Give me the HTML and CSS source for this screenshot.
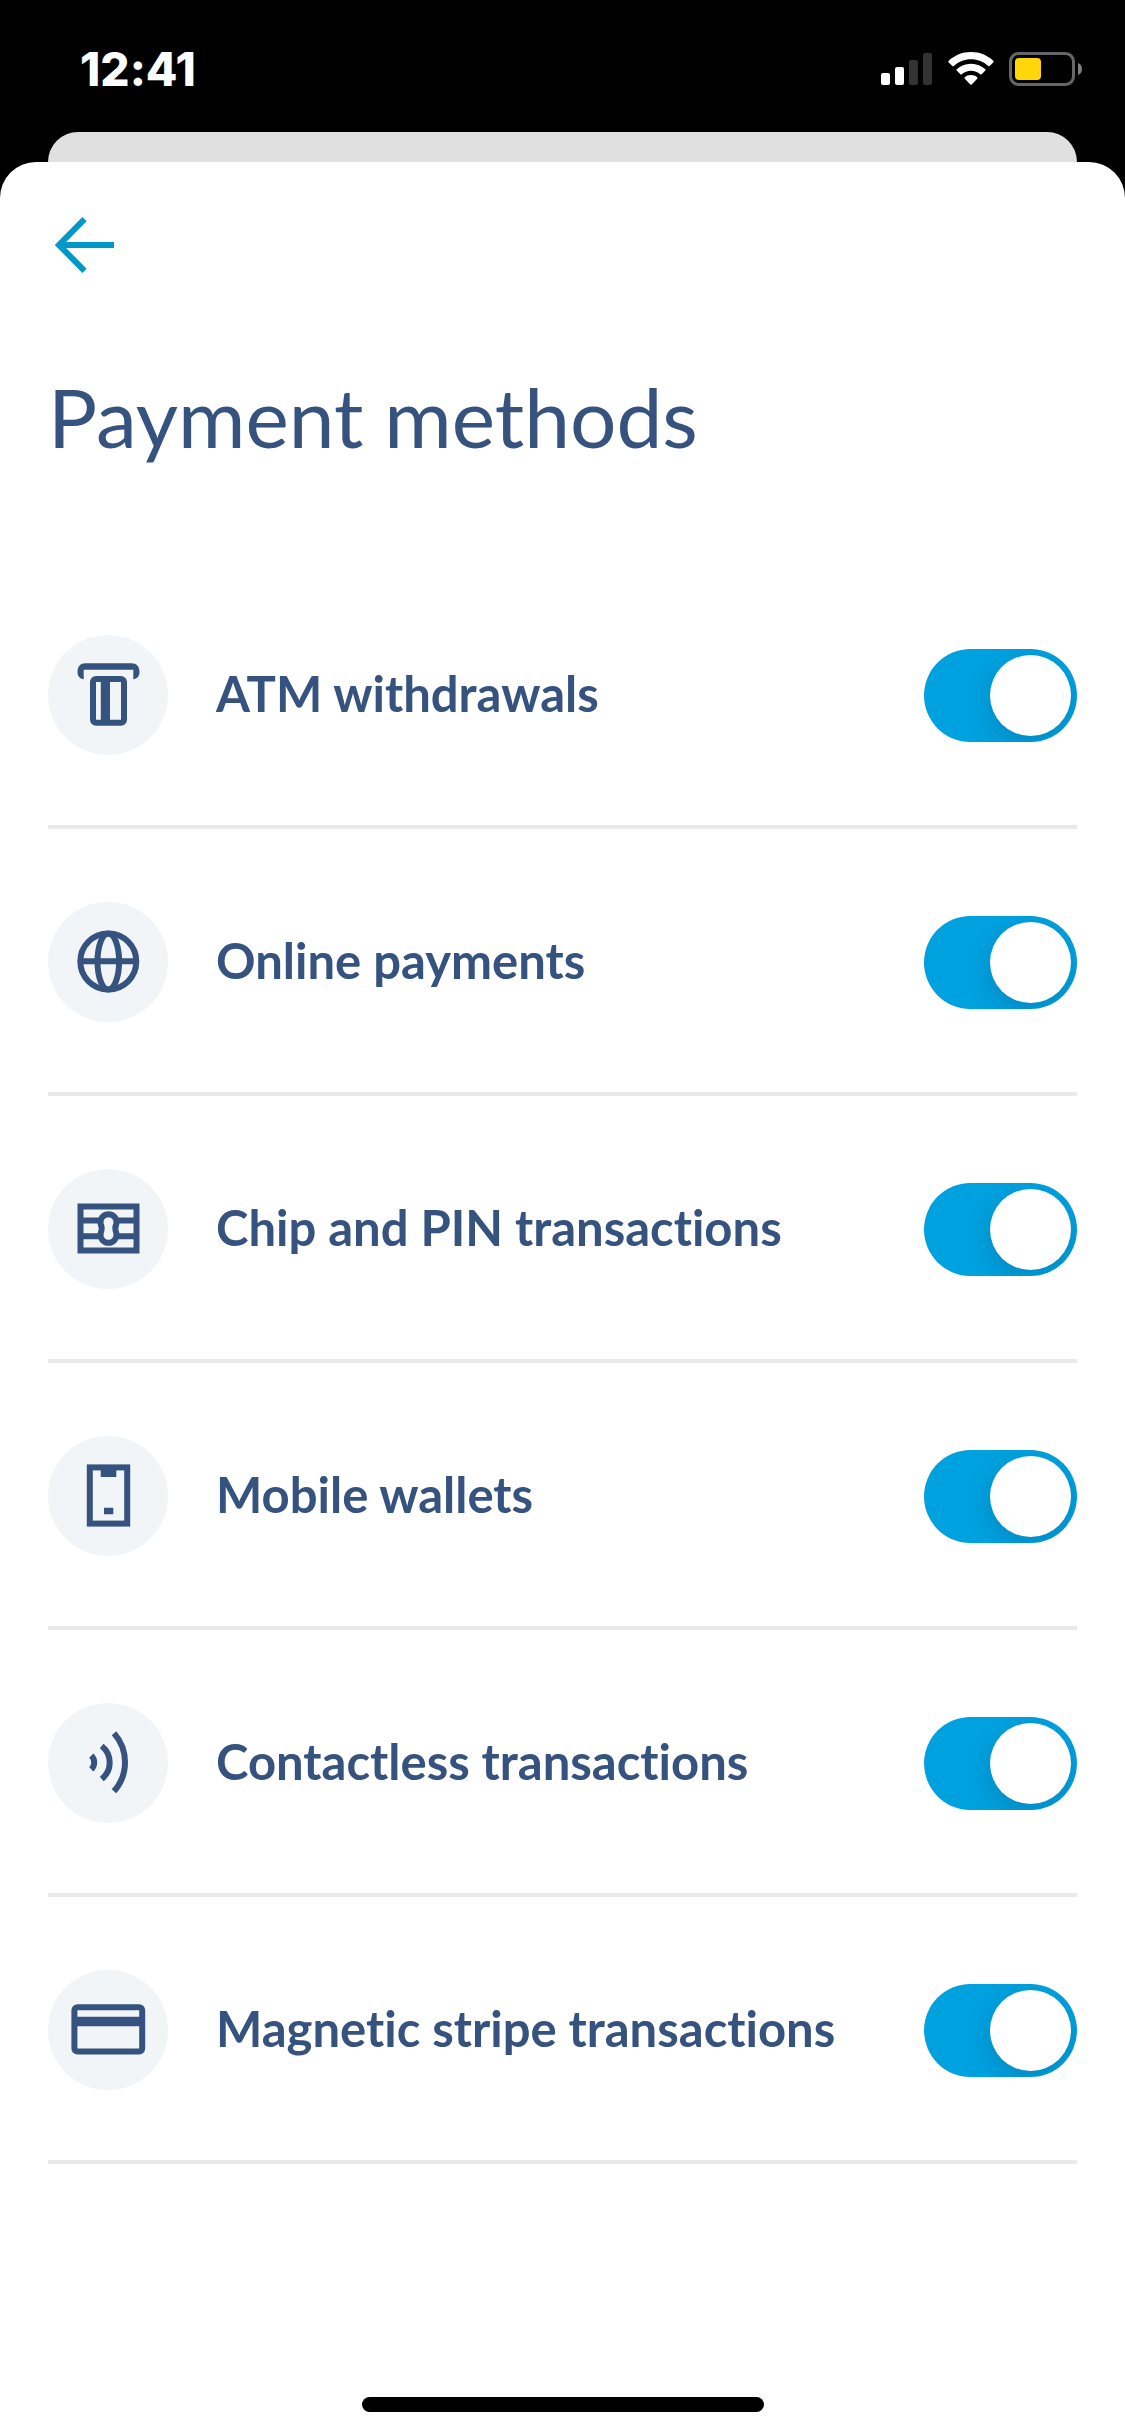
FILE: index.html
```html
<!DOCTYPE html>
<html lang="en">
<head>
    <meta charset="UTF-8">
    <meta name="viewport" content="width=device-width, initial-scale=1.0">
    <title>Payment methods</title>
    <link rel="stylesheet" href="styles.css">
</head>
<body>
    <div class="status-bar">
        <span class="time">12:41</span>
        <div class="status-icons">
            <svg width="52" height="34" viewBox="0 0 52 34">
                <rect x="0" y="21" width="9" height="12" rx="2" fill="#fff"/>
                <rect x="14" y="15" width="9" height="18" rx="2" fill="#fff"/>
                <rect x="28" y="8" width="9" height="25" rx="2" fill="#333"/>
                <rect x="42" y="1" width="9" height="32" rx="2" fill="#333"/>
            </svg>
            <svg width="46" height="34" viewBox="0 0 46 34">
                <g fill="#fff">
                    <path d="M23 0C32 0 39.600 3.400 45.300 8.800Q46 9.600 45.300 10.400L41.600 14Q40.900 14.600 40.200 14C35.500 9.700 29.600 7.300 23 7.300S10.500 9.700 5.800 14Q5.100 14.600 4.400 14L.7 10.400Q0 9.600 .7 8.800C6.400 3.400 14 0 23 0z"/>
                    <path d="M23 11.800C28.700 11.800 33.600 13.900 37.300 17.200Q38 17.900 37.300 18.600L33.600 22.200Q32.900 22.800 32.200 22.200C29.600 20 26.500 18.800 23 18.800S16.400 20 13.800 22.200Q13.100 22.800 12.400 22.200L8.700 18.600Q8 17.900 8.700 17.200C12.400 13.900 17.300 11.800 23 11.800z"/>
                    <path d="M23 23C25.600 23 27.600 23.900 29.200 25.300Q29.900 26 29.200 26.700L23.700 32.400Q23 33.200 22.300 32.400L16.800 26.700Q16.100 26 16.800 25.300C18.400 23.900 20.400 23 23 23z"/>
                </g>
            </svg>
            <svg width="74" height="34" viewBox="0 0 74 34">
                <rect x="1.500" y="1.500" width="63" height="31" rx="8" fill="none" stroke="#666" stroke-width="3"/>
                <rect x="6" y="6" width="26" height="22" rx="4" fill="#ffd60a"/>
                <path d="M69 11q4 1.500 4 6t-4 6z" fill="#808080"/>
            </svg>
        </div>
    </div>

    <div class="back-card"></div>

    <main class="sheet">
        <button class="back-btn" type="button" aria-label="Back">
            <svg width="60" height="56" viewBox="0 0 60 56">
                <path d="M29.500 2.200L4 28l25.500 25.800M5 28h54" fill="none" stroke="#0098c9" stroke-width="6"/>
            </svg>
        </button>
        <h1>Payment methods</h1>

        <ul class="methods">
            <li>
                <svg class="icon" viewBox="0 0 120 120">
                    <path d="M35.700 44.300c-4-.5-6.200-3.300-6.200-7.300 0-5.500 3-8.700 7.800-8.700h46.400c4.800 0 7.800 3.200 7.800 8.700 0 4-2.200 6.800-6.200 7.300v-9.600H35.700z" class="solid"/>
                    <rect x="45" y="44" width="31" height="43.700" rx="3"/>
                    <path d="M52.800 44H62v43H52.800z" class="solid"/>
                </svg>
                <label for="atm">ATM withdrawals</label>
                <input class="switch" type="checkbox" role="switch" id="atm" checked>
            </li>
            <li>
                <svg class="icon" viewBox="0 0 120 120">
                    <circle cx="60.300" cy="59.500" r="28"/>
                    <ellipse cx="60.300" cy="59.500" rx="10.800" ry="28"/>
                    <path d="M32 59.300h56"/>
                </svg>
                <label for="online">Online payments</label>
                <input class="switch" type="checkbox" role="switch" id="online" checked>
            </li>
            <li>
                <svg class="icon" viewBox="0 0 120 120">
                    <rect x="32.500" y="37.500" width="56" height="44"/>
                    <path d="M32 51.500h57M32 67.200h57"/>
                    <path d="M52.700 55a8 8 0 1 1 15.600 0q-2 4.500 0 9a8 8 0 1 1-15.600 0q2-4.500 0-9z" class="hole"/>
                </svg>
                <label for="chip">Chip and PIN transactions</label>
                <input class="switch" type="checkbox" role="switch" id="chip" checked>
            </li>
            <li>
                <svg class="icon" viewBox="0 0 120 120">
                    <rect x="41.800" y="31.400" width="37.400" height="56.200"/>
                    <path d="M52.700 33h15.600v8H52.700zM56 71.700h9.300v6.600H56z" class="solid"/>
                </svg>
                <label for="mobile">Mobile wallets</label>
                <input class="switch" type="checkbox" role="switch" id="mobile" checked>
            </li>
            <li>
                <svg class="icon" viewBox="0 0 120 120">
                    <path d="M43.300 52.700a9.400 9.400 0 0 1 0 13.600M53.700 43a21 21 0 0 1 0 33M66 30.300a43.700 43.700 0 0 1 0 58"/>
                </svg>
                <label for="contactless">Contactless transactions</label>
                <input class="switch" type="checkbox" role="switch" id="contactless" checked>
            </li>
            <li>
                <svg class="icon" viewBox="0 0 120 120">
                    <rect x="26.400" y="37.200" width="67.800" height="44.300" rx="3"/>
                    <path d="M26 46.700h68v9.600H26z" class="solid"/>
                </svg>
                <label for="magstripe">Magnetic stripe transactions</label>
                <input class="switch" type="checkbox" role="switch" id="magstripe" checked>
            </li>
        </ul>

        <div class="home-indicator"></div>
    </main>
</body>
</html>
```

FILE: styles.css
```css
* {
    box-sizing: border-box;
}
body {
    margin: 0;
    min-height: 100vh;
    display: flex;
    flex-direction: column;
    background: #000;
    color: #36527f;
    font-family: Lato, 'Open Sans', sans-serif;
    font-variant-ligatures: none;
}

/* status bar */
.status-bar {
    height: 132px;
    padding: 6px 42px 0 80px;
    display: flex;
    align-items: center;
    justify-content: space-between;
}
.time {
    color: #fff;
    font-family: Inter, sans-serif;
    font-size: 46px;
    font-weight: 800;
}
.status-icons {
    display: flex;
    align-items: center;
    gap: 15px;
}
.status-icons svg {
    display: block;
}

/* sheet */
.back-card {
    height: 30px;
    margin: 0 48px;
    background: #e0e0e0;
    border-radius: 30px 30px 0 0;
}
.sheet {
    flex: 1;
    display: flex;
    flex-direction: column;
    padding: 0 48px 24px;
    background: #fff;
    border-radius: 36px 36px 0 0;
}
.back-btn {
    align-self: flex-start;
    margin-top: 48px;
    padding: 7px;
    border: none;
    background: none;
    cursor: pointer;
}
.back-btn svg {
    display: block;
}
h1 {
    margin: 86px 0 96px;
    font-size: 82px;
    font-weight: 400;
    line-height: 100px;
}

/* list */
.methods {
    list-style: none;
    margin: 0;
    padding: 0;
}
.methods li {
    display: flex;
    align-items: center;
    padding: 73px 0 70px;
    border-bottom: 4px solid #e9e9e9;
}
.icon {
    flex: none;
    width: 120px;
    height: 120px;
    border-radius: 50%;
    background: #f1f5f8;
    fill: none;
    stroke: #36527f;
    stroke-width: 6px;
}
.icon .solid {
    fill: #36527f;
    stroke: none;
}
.icon .hole {
    fill: #f1f5f8;
}
.methods label {
    flex: 1;
    margin-left: 48px;
    padding-bottom: 4px;
    font-size: 49px;
    font-weight: 700;
    line-height: 60px;
}
.switch {
    appearance: none;
    flex: none;
    width: 153px;
    height: 93px;
    margin: 0;
    padding: 6px;
    display: flex;
    border-radius: 47px;
    background: #c8d0da;
    overflow: hidden;
    cursor: pointer;
}
.switch::before {
    content: "";
    width: 81px;
    height: 81px;
    border-radius: 50%;
    background: #fff;
    box-shadow: 0 8px 24px rgba(0, 40, 80, 0.2);
}
.switch:checked {
    justify-content: flex-end;
    background: #00a1df;
}

.home-indicator {
    width: 402px;
    height: 15px;
    margin: auto auto 0;
    border-radius: 8px;
    background: #000;
}
```
